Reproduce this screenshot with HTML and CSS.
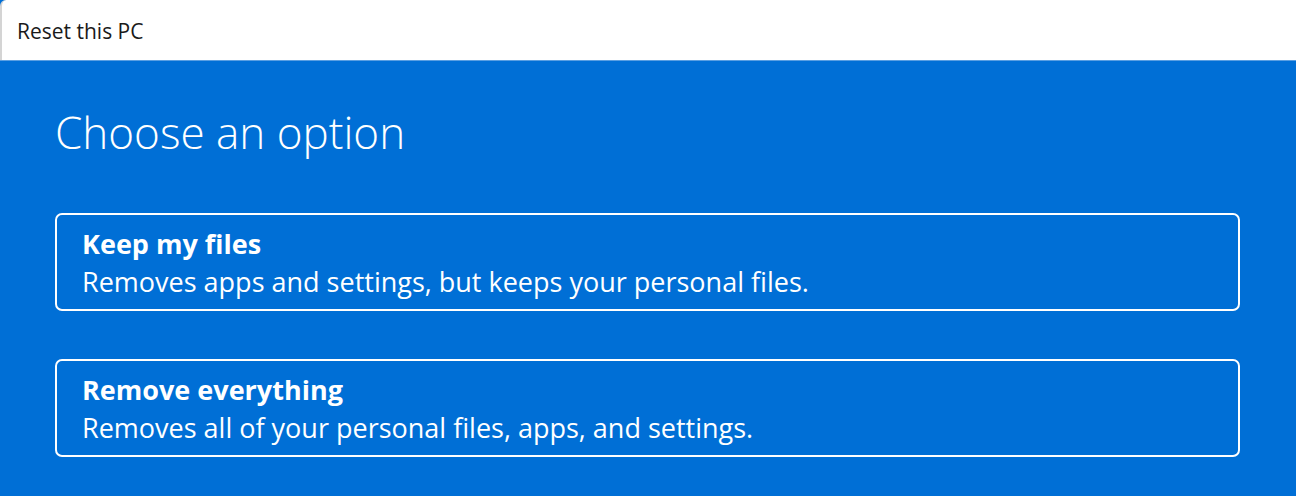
FILE: index.html
```html
<!DOCTYPE html>
<html lang="en">
<head>
  <meta charset="UTF-8" />
  <title>Reset this PC</title>
  <link rel="stylesheet" href="styles.css">
</head>
<body>

  <div class="title-bar">Reset this PC</div>

  <div class="content">
    <h1 class="heading">Choose an option</h1>

    <div class="options">
      <div class="option">
        <div class="option-title">Keep my files</div>
        <div class="option-desc">Removes apps and settings, but keeps your personal files.</div>
      </div>
      <div class="option">
        <div class="option-title">Remove everything</div>
        <div class="option-desc">Removes all of your personal files, apps, and settings.</div>
      </div>
    </div>
  </div>

</body>
</html>
```

FILE: styles.css
```css
html, body {
  margin: 0;
  padding: 0;
  height: 100%;
  overflow: hidden;
  font-family: "Open Sans", "Noto Sans", sans-serif;
  background-color: #006fd6;
  color: white;
}

.title-bar {
  height: 60px;
  box-sizing: border-box;
  background: white;
  color: #1a1a1a;
  font-size: 21px;
  line-height: 28px;
  padding: 17px 0 0 15px;
  border-left: 2px solid #d4d4d4;
  border-top-left-radius: 6px;
}

.content {
  border-top: 1px solid #5a9fe2;
  padding: 41px 56px 0 55px;
}

.heading {
  margin: 0;
  font-size: 44px;
  font-weight: 300;
  line-height: 60px;
}

.options {
  display: flex;
  flex-direction: column;
  gap: 48px;
  margin-top: 51px;
}

.option {
  height: 98px;
  box-sizing: border-box;
  border: 2px solid white;
  border-radius: 7px;
  padding: 10px 25px 8px;
}

.option-title {
  font-size: 27px;
  font-weight: 700;
  line-height: 38px;
}

.option-desc {
  font-size: 27px;
  line-height: 38px;
}
```
